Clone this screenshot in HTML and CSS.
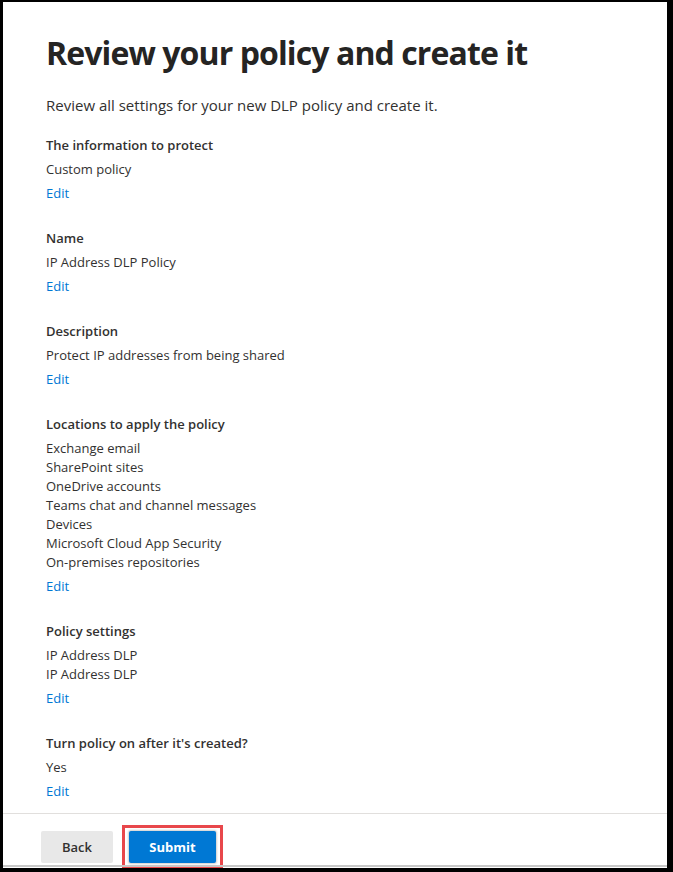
FILE: index.html
```html
<!DOCTYPE html>
<html lang="en">
<head>
<meta charset="utf-8">
<title>Review your policy and create it</title>
<link rel="stylesheet" href="styles.css">
</head>
<body>
<div class="frame">
  <main class="panel">
    <div class="content">
      <h1 class="title">Review your policy and create it</h1>
      <p class="subtitle">Review all settings for your new DLP policy and create it.</p>

      <section class="section">
        <h2 class="heading">The information to protect</h2>
        <ul class="items"><li>Custom policy</li></ul>
        <a class="edit" href="#">Edit</a>
      </section>

      <section class="section">
        <h2 class="heading">Name</h2>
        <ul class="items"><li>IP Address DLP Policy</li></ul>
        <a class="edit" href="#">Edit</a>
      </section>

      <section class="section">
        <h2 class="heading">Description</h2>
        <ul class="items"><li>Protect IP addresses from being shared</li></ul>
        <a class="edit" href="#">Edit</a>
      </section>

      <section class="section">
        <h2 class="heading">Locations to apply the policy</h2>
        <ul class="items">
          <li>Exchange email</li>
          <li>SharePoint sites</li>
          <li>OneDrive accounts</li>
          <li>Teams chat and channel messages</li>
          <li>Devices</li>
          <li>Microsoft Cloud App Security</li>
          <li>On-premises repositories</li>
        </ul>
        <a class="edit" href="#">Edit</a>
      </section>

      <section class="section">
        <h2 class="heading">Policy settings</h2>
        <ul class="items">
          <li>IP Address DLP</li>
          <li>IP Address DLP</li>
        </ul>
        <a class="edit" href="#">Edit</a>
      </section>

      <section class="section">
        <h2 class="heading">Turn policy on after it's created?</h2>
        <ul class="items"><li>Yes</li></ul>
        <a class="edit" href="#">Edit</a>
      </section>
    </div>

    <footer class="footer">
      <button class="btn btn-back" type="button">Back</button>
      <span class="highlight"><button class="btn btn-submit" type="button">Submit</button></span>
    </footer>
    <div class="bottom-line"></div>
  </main>
</div>
</body>
</html>
```

FILE: styles.css
```css
* { box-sizing: border-box; }

html, body {
  margin: 0;
  padding: 0;
  height: 100%;
}

body {
  background: #000;
  font-family: "Open Sans", "Noto Sans", "Liberation Sans", sans-serif;
  color: #323130;
}

.frame {
  height: 872px;
  padding: 2px 6px 4px 3px;
}

.panel {
  height: 100%;
  background: #fff;
  display: flex;
  flex-direction: column;
}

.content {
  flex: 1;
  padding: 31px 20px 0 43px;
}

.title {
  margin: 0;
  font-size: 32px;
  line-height: 40px;
  font-weight: 700;
  color: #252423;
  letter-spacing: -0.9px;
}

.subtitle {
  margin: 21px 0 0;
  font-size: 15px;
  line-height: 22px;
}

.section {
  margin-top: 20px;
  display: flex;
  flex-direction: column;
  align-items: flex-start;
  font-size: 13px;
  line-height: 19px;
}

.section + .section {
  margin-top: 26px;
}

.heading {
  margin: 0;
  font-size: 13px;
  line-height: 19px;
  font-weight: 600;
}

.items {
  list-style: none;
  margin: 5px 0 0;
  padding: 0;
}

.edit {
  margin-top: 5px;
  color: #0078d4;
  text-decoration: none;
}

.footer {
  border-top: 1px solid #e1dfdd;
  height: 52px;
  padding: 11px 0 0 38px;
  display: flex;
  align-items: flex-start;
  gap: 9px;
}

.btn {
  height: 32px;
  border: 0;
  border-radius: 2px;
  font-family: inherit;
  font-size: 13px;
  cursor: pointer;
}

.btn-back {
  width: 72px;
  margin-top: 6px;
  background: #e8e8e8;
  color: #323130;
  font-weight: 600;
}

.highlight {
  display: inline-flex;
  border: 3px solid #e8474b;
  padding: 3px 4px 2px;
}

.btn-submit {
  width: 87px;
  background: #0078d4;
  color: #fff;
  font-weight: 700;
  box-shadow: 0 0 2px 1px #cfcfcf;
}

.bottom-line {
  height: 2px;
  background: #c8c8c8;
  margin-bottom: 1px;
}
```
